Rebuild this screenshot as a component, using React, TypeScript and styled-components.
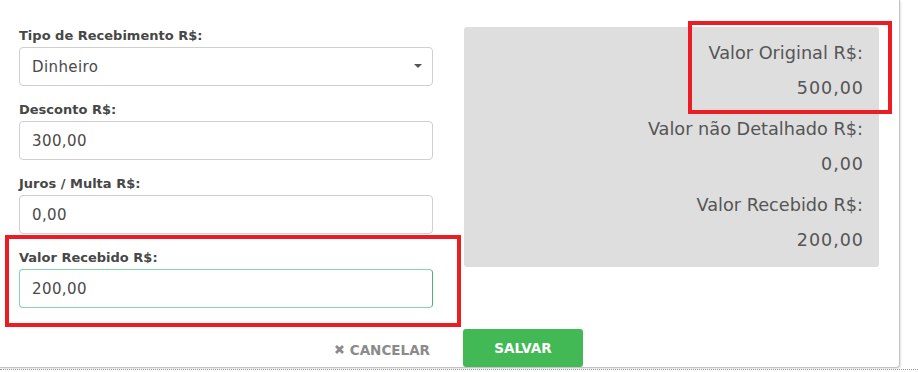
import React from "react";
import styled, { createGlobalStyle } from "styled-components";

const Global = createGlobalStyle`
  html, body { margin: 0; padding: 0; background: #fff; }
  body { font-family: "DejaVu Sans", "Open Sans", sans-serif; }
  * { box-sizing: border-box; }
`;

const Page = styled.div`
  position: relative;
  width: 918px;
  height: 372px;
  overflow: hidden;
  background: #fff;
`;

const Modal = styled.div`
  width: 900px;
  height: 368px;
  background: #fff;
  border-right: 1px solid #c4c4c4;
  border-bottom: 1px solid #c4c4c4;
  border-bottom-right-radius: 4px;
  box-shadow: 1px 1px 2px rgba(0, 0, 0, 0.12);
  display: flex;
  flex-direction: column;
`;

const Body = styled.div`
  display: grid;
  grid-template-columns: 414px 415px;
  column-gap: 31px;
  padding: 27px 0 0 19px;
`;

const Column = styled.div`
  display: flex;
  flex-direction: column;
`;

const Field = styled.div`
  display: flex;
  flex-direction: column;
  margin-bottom: 15px;
`;

const Label = styled.label`
  font-size: 13px;
  font-weight: 700;
  line-height: 18px;
  color: #474747;
  margin-bottom: 2px;
`;

const Input = styled.div<{ $focused?: boolean }>`
  height: 39px;
  border: 1px solid ${(p) => (p.$focused ? "#84d5a8" : "#cfcfcf")};
  border-right-color: ${(p) => (p.$focused ? "#4bb36f" : "#cfcfcf")};
  border-radius: 4px;
  padding: 0 12px;
  display: flex;
  align-items: center;
  justify-content: space-between;
  font-size: 15px;
  color: #4a4a4a;
  letter-spacing: 0.4px;
`;

const Caret = styled.span`
  width: 0;
  height: 0;
  border-left: 4px solid transparent;
  border-right: 4px solid transparent;
  border-top: 4px solid #555;
  margin-right: -2px;
  margin-top: -2px;
`;

const Summary = styled.div`
  background: #dedede;
  border-radius: 3px;
  height: 240px;
  padding: 16px 16px 0 0;
  display: flex;
  flex-direction: column;
  align-items: flex-end;
`;

const SumLabel = styled.div`
  font-size: 17.7px;
  line-height: 20px;
  color: #555;
  margin-bottom: 15px;
`;

const SumValue = styled.div`
  font-size: 17.5px;
  line-height: 20px;
  color: #555;
  margin-bottom: 21px;
  letter-spacing: 1px;
  margin-right: -1px;
`;

const Footer = styled.div`
  display: grid;
  grid-template-columns: 414px 415px;
  column-gap: 31px;
  padding: 6px 0 0 19px;
`;

const CancelCell = styled.div`
  display: flex;
  justify-content: flex-end;
  align-items: center;
  padding-right: 3px;
  padding-top: 3px;
`;

const CancelButton = styled.button`
  background: none;
  border: none;
  padding: 0;
  display: flex;
  align-items: center;
  gap: 6px;
  font-family: inherit;
  font-size: 13.5px;
  font-weight: 700;
  color: #8b8b8b;
  cursor: pointer;
`;

const SaveCell = styled.div`
  display: flex;
  margin-left: -1px;
`;

const SaveButton = styled.button`
  width: 120px;
  height: 38px;
  background: #42b955;
  border: none;
  border-radius: 3px;
  color: #fff;
  font-family: inherit;
  font-size: 13.5px;
  font-weight: 700;
  padding-bottom: 2px;
  cursor: pointer;
`;

const Dotted = styled.div`
  position: absolute;
  left: 0;
  right: 0;
  top: 369px;
  border-top: 1px dotted #9a9a9a;
`;

const Highlight = styled.div`
  position: absolute;
  border: 4px solid #ec1c24;
  pointer-events: none;
`;

const XIcon = () => (
  <svg width="9" height="9" viewBox="0 0 9 9">
    <path d="M1 1 L8 8 M8 1 L1 8" stroke="#8b8b8b" strokeWidth="2.8" strokeLinecap="butt" />
  </svg>
);

const fields = [
  { label: "Tipo de Recebimento R$:", value: "Dinheiro", select: true },
  { label: "Desconto R$:", value: "300,00" },
  { label: "Juros / Multa R$:", value: "0,00" },
  { label: "Valor Recebido R$:", value: "200,00", focused: true },
];

const summary = [
  { label: "Valor Original R$:", value: "500,00" },
  { label: "Valor não Detalhado R$:", value: "0,00" },
  { label: "Valor Recebido R$:", value: "200,00" },
];

export default function App() {
  return (
    <Page>
      <Global />
      <Modal>
        <Body>
          <Column>
            {fields.map((f) => (
              <Field key={f.label}>
                <Label>{f.label}</Label>
                <Input $focused={f.focused}>
                  <span>{f.value}</span>
                  {f.select && <Caret />}
                </Input>
              </Field>
            ))}
          </Column>
          <Column>
            <Summary>
              {summary.map((s) => (
                <React.Fragment key={s.label}>
                  <SumLabel>{s.label}</SumLabel>
                  <SumValue>{s.value}</SumValue>
                </React.Fragment>
              ))}
            </Summary>
          </Column>
        </Body>
        <Footer>
          <CancelCell>
            <CancelButton>
              <XIcon />
              CANCELAR
            </CancelButton>
          </CancelCell>
          <SaveCell>
            <SaveButton>SALVAR</SaveButton>
          </SaveCell>
        </Footer>
      </Modal>
      <Dotted />
      <Highlight style={{ left: 5, top: 235, width: 456, height: 92 }} />
      <Highlight style={{ left: 688, top: 21, width: 204, height: 93 }} />
    </Page>
  );
}
